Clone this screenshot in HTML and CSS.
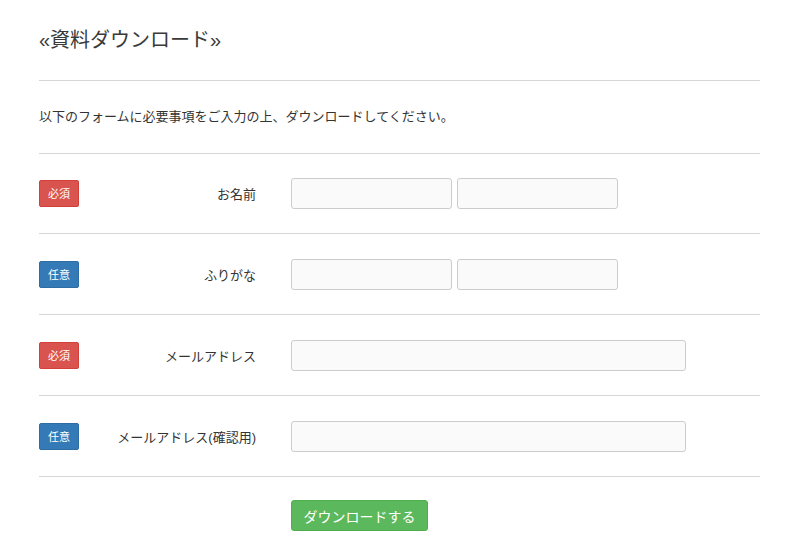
FILE: index.html
```html
<!DOCTYPE html>
<html lang="ja">
<head>
<meta charset="utf-8">
<title>資料ダウンロード</title>
<link rel="stylesheet" href="styles.css">
</head>
<body>
<div class="page">
  <h1 class="title">«資料ダウンロード»</h1>
  <hr class="rule">
  <p class="intro">以下のフォームに必要事項をご入力の上、ダウンロードしてください。</p>
  <form class="form">
    <div class="row row-first">
      <span class="badge badge-req">必須</span>
      <label class="label">お名前</label>
      <div class="fields">
        <input class="input input-half" type="text">
        <input class="input input-half" type="text">
      </div>
    </div>
    <div class="row">
      <span class="badge badge-opt">任意</span>
      <label class="label">ふりがな</label>
      <div class="fields">
        <input class="input input-half" type="text">
        <input class="input input-half" type="text">
      </div>
    </div>
    <div class="row">
      <span class="badge badge-req">必須</span>
      <label class="label">メールアドレス</label>
      <div class="fields">
        <input class="input input-full" type="text">
      </div>
    </div>
    <div class="row">
      <span class="badge badge-opt">任意</span>
      <label class="label">メールアドレス(確認用)</label>
      <div class="fields">
        <input class="input input-full" type="text">
      </div>
    </div>
    <div class="actions">
      <button class="btn" type="button">ダウンロードする</button>
    </div>
  </form>
</div>
</body>
</html>
```
FILE: styles.css
```css
html, body {
  margin: 0;
  padding: 0;
  background: #fff;
}
body {
  font-family: "Liberation Sans", "Noto Sans CJK JP", sans-serif;
  color: #333;
}
.page {
  width: 721px;
  padding: 0 0 0 39px;
}
.title {
  margin: 0;
  padding-top: 28px;
  height: 30px;
  font-size: 20px;
  line-height: 24px;
  font-weight: normal;
  color: #3a3a3a;
}
.rule {
  margin: 22px 0 0;
  border: 0;
  border-top: 1px solid #d6d6d6;
  height: 0;
}
.intro {
  margin: 0;
  height: 72px;
  font-size: 13px;
  line-height: 72px;
  color: #333;
  border-bottom: 1px solid #d6d6d6;
}
.form {
  margin: 0;
}
.row {
  display: flex;
  align-items: center;
  height: 80px;
  border-bottom: 1px solid #d6d6d6;
}
.row-first {
  height: 79px;
}
.badge {
  width: 40px;
  height: 27px;
  line-height: 27px;
  text-align: center;
  font-size: 11px;
  color: #fff;
  border-radius: 2px;
  box-sizing: border-box;
}
.badge-req {
  background: #d9534f;
  border: 1px solid #d43f3a;
}
.badge-opt {
  background: #337ab7;
  border: 1px solid #2e6da4;
}
.label {
  width: 177px;
  text-align: right;
  font-size: 13px;
  color: #333;
}
.fields {
  display: flex;
  gap: 5px;
  margin-left: 35px;
}
.input {
  height: 31px;
  box-sizing: border-box;
  border: 1px solid #ccc;
  border-radius: 3px;
  background: #fafafa;
  margin: 0;
  padding: 0 8px;
  font-size: 13px;
}
.input-half {
  width: 161px;
}
.input-full {
  width: 395px;
}
.actions {
  padding: 23px 0 0 252px;
}
.btn {
  width: 137px;
  height: 31px;
  border: 1px solid #4cae4c;
  border-radius: 3px;
  background: #5cb85c;
  color: #fff;
  font-family: "Liberation Sans", "Noto Sans CJK JP", sans-serif;
  font-size: 14px;
  padding: 0;
}
```
